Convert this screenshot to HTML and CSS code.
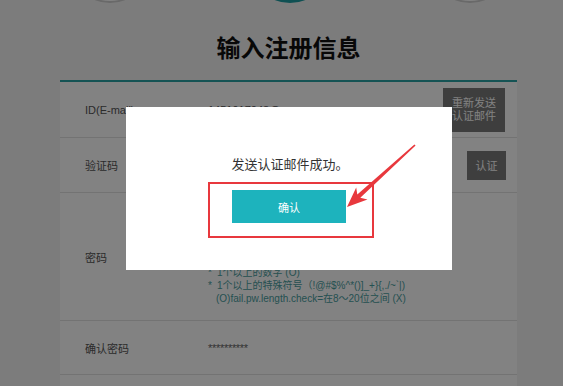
FILE: index.html
```html
<!DOCTYPE html>
<html lang="zh-CN">
<head>
<meta charset="utf-8">
<title>输入注册信息</title>
<link rel="stylesheet" href="styles.css">
</head>
<body>
<div class="page">
  <div class="wrap">
    <div class="steps">
      <span class="step"></span>
      <span class="step step-on"></span>
      <span class="step"></span>
    </div>
    <h1 class="title">输入注册信息</h1>
    <div class="form">
      <div class="row row-id">
        <div class="label">ID(E-mail)</div>
        <div class="value">1451917048@qq.com</div>
        <button class="btn btn-two">重新发送<br>认证邮件</button>
      </div>
      <div class="row row-code">
        <div class="label">验证码</div>
        <div class="value"></div>
        <button class="btn btn-small">认证</button>
      </div>
      <div class="row row-pw">
        <div class="label">密码</div>
        <div class="value value-pw">
          <ul class="hints">
            <li class="hint"><span class="dot">*</span>8～20位英文字母 (O)</li>
            <li class="hint"><span class="dot">*</span>1个以上的数字 (O)</li>
            <li class="hint"><span class="dot">*</span>1个以上的特殊符号（!@#$%^*()]_+}{,./~`|)</li>
            <li class="hint hint-plain">(O)fail.pw.length.check=在8～20位之间 (X)</li>
          </ul>
        </div>
      </div>
      <div class="row row-pw2">
        <div class="label">确认密码</div>
        <div class="value value-stars">**********</div>
      </div>
      <div class="row row-more"></div>
    </div>
  </div>

  <div class="overlay">
    <div class="modal">
      <p class="modal-text">发送认证邮件成功。</p>
      <button class="ok">确认</button>
      <span class="mark"></span>
      <svg class="arrow" width="326" height="163" viewBox="0 0 326 163">
        <polygon fill="#e8383d" points="221,100 241.5,92.6 234.3,90.8 289.6,38.4 288.4,37.6 231.3,87.6 230.2,80.4"/>
      </svg>
    </div>
  </div>
</div>
</body>
</html>
```

FILE: styles.css
```css
* { box-sizing: border-box; }
html, body { margin: 0; padding: 0; }
body {
  font-family: "Liberation Sans", "Noto Sans CJK SC", sans-serif;
  background: #f4f4f4;
}
.page {
  position: relative;
  width: 563px;
  height: 386px;
  overflow: hidden;
  background: #f4f4f4;
}
.wrap {
  margin-left: 60px;
  width: 457px;
}
.steps {
  display: flex;
  justify-content: center;
  align-items: flex-end;
  gap: 100px;
  height: 3px;
  padding-left: 3px;
}
.step {
  flex: none;
  width: 80px;
  height: 80px;
  margin-bottom: 0;
  border-radius: 50%;
  background: #ffffff;
  border: 2px solid #cfcfcf;
}
.step-on {
  background: #1f9ea3;
  border-color: #1f9ea3;
}
.title {
  margin: 0;
  padding: 31px 0 16px;
  font-size: 24px;
  line-height: 30px;
  font-weight: bold;
  color: #111;
  text-align: center;
}
.form {
  background: #ffffff;
  border-top: 2px solid #2aa3a6;
}
.row {
  display: flex;
  align-items: center;
  border-bottom: 1px solid #e1e1e1;
  padding-right: 12px;
}
.row-id { height: 56px; }
.row-code { height: 55px; }
.row-pw { height: 128px; }
.row-pw2 { height: 54px; }
.row-more { height: 30px; border-bottom: 0; }
.label {
  flex: none;
  width: 148px;
  padding-left: 25px;
  font-size: 11px;
  color: #555;
}
.value {
  flex: 1;
  font-size: 11px;
  color: #555;
}
.value-stars {
  color: #666;
  letter-spacing: -0.3px;
}
.btn {
  flex: none;
  border: 0;
  padding: 0;
  margin: 0;
  font-family: inherit;
  font-size: 11px;
  color: #ffffff;
  background: #7a7a7a;
}
.btn-two {
  width: 62px;
  height: 44px;
  line-height: 13px;
}
.btn-small {
  width: 39px;
  height: 29px;
  margin-right: -1px;
}
.value-pw {
  align-self: flex-end;
  padding-bottom: 15px;
}
.hints {
  list-style: none;
  margin: 0;
  padding: 0;
  font-size: 10px;
  line-height: 13px;
  color: #4a9ea0;
}
.hint { display: flex; white-space: nowrap; }
.dot { width: 9px; flex: none; }
.hint-plain { padding-left: 8px; }

.overlay {
  position: absolute;
  inset: 0;
  background: rgba(0, 0, 0, 0.49);
}
.modal {
  position: absolute;
  left: 126px;
  top: 107px;
  width: 326px;
  height: 163px;
  background: #ffffff;
  display: flex;
  flex-direction: column;
  align-items: center;
  padding-top: 48px;
}
.modal-text {
  margin: 0;
  font-size: 13px;
  line-height: 20px;
  color: #333;
  padding-left: 2px;
}
.ok {
  margin-top: 15px;
  width: 114px;
  height: 33px;
  border: 0;
  background: #1db3bd;
  color: #ffffff;
  font-family: inherit;
  font-size: 11px;
}
.mark {
  position: absolute;
  left: 82px;
  top: 75px;
  width: 166px;
  height: 56px;
  border: 2px solid #e8383d;
}
.arrow {
  position: absolute;
  left: 0;
  top: 0;
  overflow: visible;
}
```
